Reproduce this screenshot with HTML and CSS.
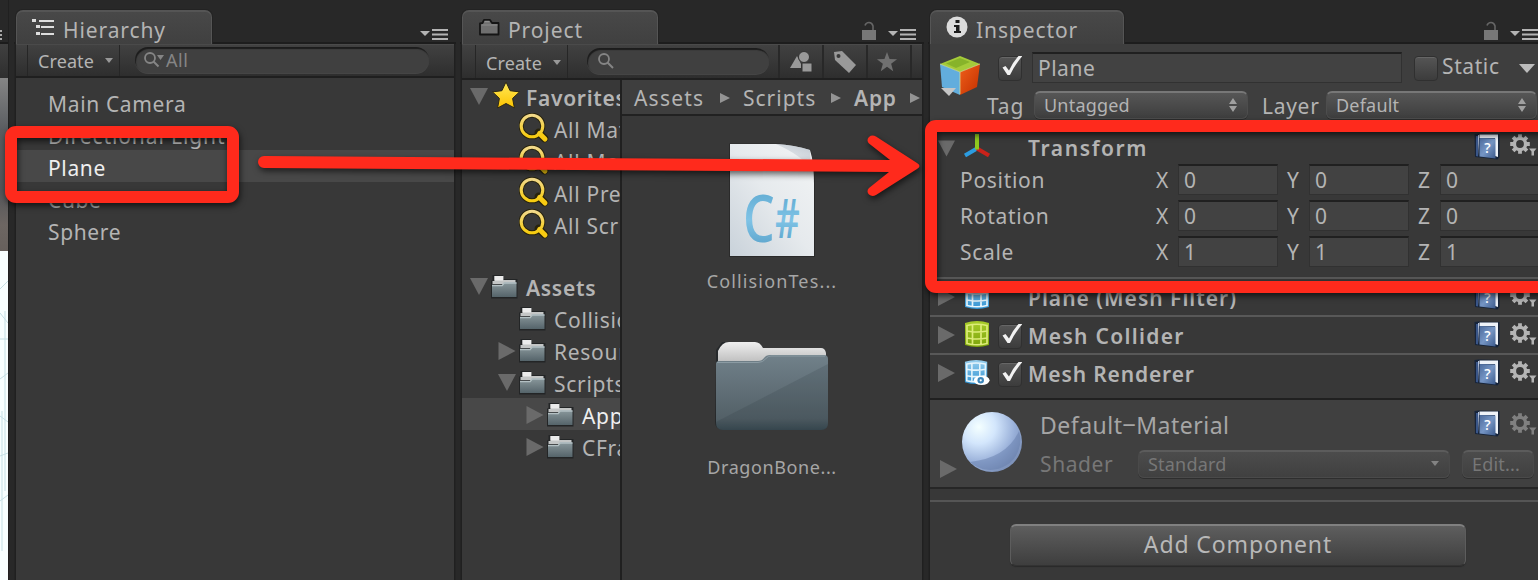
FILE: index.html
```html
<!DOCTYPE html>
<html lang="en">
<head>
<meta charset="utf-8">
<title>Unity Editor</title>
<link rel="stylesheet" href="styles.css">
</head>
<body>
<svg class="defs" width="0" height="0" aria-hidden="true">
  <defs>
    <linearGradient id="gFolder" x1="0" y1="0" x2="0" y2="1"><stop offset="0" stop-color="#89979b"/><stop offset="1" stop-color="#55646a"/></linearGradient>
    <linearGradient id="gBig" x1="0" y1="0" x2="0" y2="1"><stop offset="0" stop-color="#71818a"/><stop offset=".85" stop-color="#536067"/><stop offset="1" stop-color="#394a52"/></linearGradient>
    <linearGradient id="gTab" x1="0" y1="0" x2="0" y2="1"><stop offset="0" stop-color="#efefef"/><stop offset="1" stop-color="#b5b5b5"/></linearGradient>
    <linearGradient id="gStar" x1="0" y1="0" x2="0" y2="1"><stop offset="0" stop-color="#ffe95a"/><stop offset="1" stop-color="#fcc400"/></linearGradient>
    <linearGradient id="gLens" x1="0" y1="0" x2="0" y2="1"><stop offset="0" stop-color="#f2d98a"/><stop offset="1" stop-color="#f7cc10"/></linearGradient>
    <linearGradient id="gBook" x1="0" y1="0" x2="1" y2="1"><stop offset="0" stop-color="#4b6a9c"/><stop offset=".5" stop-color="#7595c4"/><stop offset="1" stop-color="#3c5a8c"/></linearGradient>
    <linearGradient id="gBlue" x1="0" y1="0" x2="0" y2="1"><stop offset="0" stop-color="#9bd0ee"/><stop offset="1" stop-color="#2f92d2"/></linearGradient>
    <linearGradient id="gGreen" x1="0" y1="0" x2="0" y2="1"><stop offset="0" stop-color="#a8cc2a"/><stop offset="1" stop-color="#7ba30a"/></linearGradient>
    <linearGradient id="gPage" x1="0" y1="1" x2="1" y2="0"><stop offset="0" stop-color="#c9d2da"/><stop offset=".5" stop-color="#e6eaed"/><stop offset="1" stop-color="#f2f4f5"/></linearGradient>
    <linearGradient id="gCs" x1="0" y1="0" x2="0" y2="1"><stop offset="0" stop-color="#4f9dc6"/><stop offset=".55" stop-color="#7fc3e6"/><stop offset="1" stop-color="#4a94be"/></linearGradient>
    <linearGradient id="gFold" x1="0" y1="1" x2=".5" y2="0"><stop offset="0" stop-color="#fff"/><stop offset="1" stop-color="#b9c2cc"/></linearGradient>
    <radialGradient id="gBall" cx=".28" cy=".25" r=".8"><stop offset="0" stop-color="#f4ffff"/><stop offset=".35" stop-color="#d3e6fc"/><stop offset=".75" stop-color="#98afd8"/><stop offset="1" stop-color="#7e93bb"/></radialGradient>
    <linearGradient id="gRed" x1="0" y1="0" x2="1" y2="1"><stop offset="0" stop-color="#f0601a"/><stop offset="1" stop-color="#c22f00"/></linearGradient>

    <symbol id="folder" viewBox="0 0 28 26">
      <path d="M1 24.500V6.500h1.500V1h10.500v4H27.500v19.500z" fill="#232526"/>
      <path d="M2.500 7h2V2h9v4h12v4h-23z" fill="#c4c6c6"/><path d="M4.500 2h8.500v4.500H4.500z" fill="#ececec"/>
      <path d="M2 11.500h10l2-3h12.500v14.500H2z" fill="url(#gFolder)"/><path d="M2 11.500h10.200l2-2.500h12.300" fill="none" stroke="#b3c0c3" stroke-width="1.300"/>
    </symbol>
    <symbol id="lens" viewBox="0 0 30 30">
      <path d="M19.500 19.500l6 6" stroke="#28230c" stroke-width="7.500" stroke-linecap="round"/>
      <circle cx="13" cy="13" r="10.800" fill="none" stroke="#28230c" stroke-width="5"/>
      <path d="M20.500 20.500l5.500 5.500" stroke="#f8cb12" stroke-width="5" stroke-linecap="round"/>
      <circle cx="13" cy="13" r="10.800" fill="none" stroke="url(#gLens)" stroke-width="3.100"/>
    </symbol>
    <symbol id="down" viewBox="0 0 18 17"><path d="M0 0h18L9 17z" fill="#6a6a6a"/></symbol>
    <symbol id="right" viewBox="0 0 17 18"><path d="M0 0v18l17-9z" fill="#6a6a6a"/></symbol>
    <symbol id="menu" viewBox="0 0 28 12"><path d="M0 3h10L5 8z" fill="#b4b4b4"/><path d="M12 2h16M12 6.500h16M12 11h16" stroke="#b4b4b4" stroke-width="2"/></symbol>
    <symbol id="lock" viewBox="0 0 16 20"><path d="M1 9h14v10H1z" fill="#777"/><path d="M4 4.500Q5 1.500 8 1.500T12 5v4" fill="none" stroke="#666" stroke-width="1.600"/></symbol>
    <symbol id="book" viewBox="0 0 26 27">
      <path d="M.5 1l4-.5L25.500 1v23l-2 2.500L1 24z" fill="#17243a"/><path d="M5.500 1.500H24V24l-3-1V5H5.500z" fill="#eef2f8"/>
      <path d="M2 3v20l2 .5V3z" fill="#3a5688"/><path d="M4 2v3l1 18V2z" fill="#b7c5de"/>
      <path d="M5.500 5l16 .5v20l-16-2z" fill="url(#gBook)"/>
      <text x="13.500" y="19.500" text-anchor="middle" class="book-mark">?</text>
    </symbol>
    <symbol id="gear" viewBox="0 0 28 26">
      <g stroke="currentColor" fill="none"><circle cx="11" cy="11" r="5.600" stroke-width="3.400"/>
      <path d="M11 1.200v4M11 16.800v4M1.200 11h4M16.800 11h4M4.100 4.100l3 3M14.900 14.900l3 3M17.900 4.100l-3 3M7.100 14.900l-3 3" stroke-width="3.800"/></g>
      <path d="M20 15.500h7.500l-2.500 3v4h-2.500v-4z" fill="currentColor"/>
    </symbol>
    <symbol id="mesh" viewBox="0 0 26 28">
      <path d="M1 3Q13-1 25 3v22Q13 29 1 25z"/>
      <path d="M8.500 4v20.500M17 4v20.500M3 5.500Q13 3 23 5.500v18Q13 26 3 23.500zM3 11q10 2 20 0M3 18q10 2 20 0" fill="none" stroke="currentColor" stroke-width="1.700"/>
    </symbol>
    <symbol id="check" viewBox="0 0 24 24"><path d="M4.500 11.500l3-1.500L11 14.500Q15 6 20.500 0H24.500Q17 8.500 12 19H9.500z" fill="#f2f2f2"/></symbol>
    <symbol id="updown" viewBox="0 0 8 14"><path d="M0 6l4-6 4 6zM0 8l4 6 4-6z" fill="#a0a0a0"/></symbol>
    <symbol id="caret" viewBox="0 0 8 6"><path d="M0 0h8L4 5z" fill="#989898"/></symbol>
  </defs>
</svg>

<main class="editor">
  <aside class="scene-edge">
    <div class="scene-top"><i></i><i></i><i></i></div>
    <div class="scene-bar"></div>
    <div class="scene-sky"></div>
    <svg class="scene-grid" width="8" height="329"><path d="M0 38l8-8M0 88h8M0 62l8 10M0 128l8-6M0 165l8 6M5 60v180M0 205l8-3M0 250l8-6M2 160v140" stroke="#c5dfe4" fill="none"/></svg>
  </aside>

  <section class="panel hierarchy">
    <header class="tabs">
      <div class="tab tab-h">
        <svg class="ico-tree" width="24" height="18" viewBox="0 0 24 18"><path d="M0 0h4v3H0zM4 6h4v3H4zM4 13h4v3H4zM7 1h15v2H7zM9 7h13v2H9zM9 14h13v2H9z" fill="#ddd"/></svg>
        <span class="t">Hierarchy</span>
      </div>
      <svg class="menu" width="28" height="12"><use href="#menu"/></svg>
    </header>
    <div class="toolbar">
      <div class="create">Create<svg width="8" height="6"><use href="#caret"/></svg></div>
      <div class="search search-h">
        <svg width="22" height="18" viewBox="0 0 22 18"><circle cx="7" cy="7" r="5" fill="none" stroke="#858585" stroke-width="1.800"/><path d="M10.500 10.500l5 5" stroke="#858585" stroke-width="2"/><path d="M14 4h7l-3.500 5z" fill="#858585"/></svg>All
      </div>
    </div>
    <ul class="list">
      <li>Main Camera</li>
      <li class="wide">Directional Light</li>
      <li class="on">Plane</li>
      <li>Cube</li>
      <li>Sphere</li>
    </ul>
  </section>

  <section class="panel project">
    <header class="tabs">
      <div class="tab tab-p">
        <svg class="ico-proj" width="24" height="20" viewBox="0 0 24 20"><path d="M2 5.500L4.500 5 6 2h6l2 3h6.500v11.500H2z" fill="#6f6f6f" stroke="#151515" stroke-width="1.800" stroke-linejoin="round"/><path d="M3.500 7h16" stroke="#8c8c8c"/><path d="M6.500 3.500h5" stroke="#909090" stroke-width="1.500"/></svg>
        <span class="t">Project</span>
      </div>
      <svg class="lock" width="16" height="20"><use href="#lock"/></svg>
      <svg class="menu" width="28" height="12"><use href="#menu"/></svg>
    </header>
    <div class="toolbar toolbar-p">
      <div class="create">Create<svg width="8" height="6"><use href="#caret"/></svg></div>
      <div class="search search-p"><svg width="18" height="18" viewBox="0 0 18 18"><circle cx="7" cy="7" r="5" fill="none" stroke="#858585" stroke-width="1.800"/><path d="M10.500 10.500l5.500 5.500" stroke="#858585" stroke-width="2"/></svg></div>
      <div class="tool"><svg width="24" height="24" viewBox="0 0 24 24"><path d="M1 18L8 6l4 8v4z" fill="#999"/><circle cx="15" cy="7" r="5.500" fill="#999" stroke="#333"/><path d="M13 13h10v9H13z" fill="#999" stroke="#333"/></svg></div>
      <div class="tool"><svg width="24" height="24" viewBox="0 0 24 24"><path d="M1 2l8-1 14 14-7 8L2 10z" fill="#999"/><circle cx="5.500" cy="6" r="2" fill="#383838"/></svg></div>
      <div class="tool last"><svg width="22" height="22" viewBox="0 0 24 24"><path d="M12 1l2.800 7.800 8.200.2-6.500 5 2.300 8L12 17.300 5.200 22l2.300-8L1 9l8.200-.2z" fill="#707070"/></svg></div>
    </div>
    <div class="project-body">
      <ul class="tree">
        <li class="b"><svg class="arr" width="18" height="17"><use href="#down"/></svg><svg class="star" width="30" height="28" viewBox="0 0 30 28"><path d="M15 1l4.100 8.700 9.400 1.200-6.900 6.500 1.800 9.500L15 22.500 6.600 27l1.800-9.600-6.900-6.500 9.400-1.200z" fill="url(#gStar)" stroke="#2d2814"/></svg>Favorites</li>
        <li class="q"><svg width="30" height="30"><use href="#lens"/></svg>All Materials</li>
        <li class="q"><svg width="30" height="30"><use href="#lens"/></svg>All Models</li>
        <li class="q"><svg width="30" height="30"><use href="#lens"/></svg>All Prefabs</li>
        <li class="q"><svg width="30" height="30"><use href="#lens"/></svg>All Scripts</li>
        <li class="gap"></li>
        <li class="b"><svg class="arr" width="18" height="17"><use href="#down"/></svg><svg class="fold" width="28" height="26"><use href="#folder"/></svg>Assets</li>
        <li class="l1"><span class="arr"></span><svg class="fold" width="28" height="26"><use href="#folder"/></svg>Collision</li>
        <li class="l1"><svg class="arr" width="17" height="18"><use href="#right"/></svg><svg class="fold" width="28" height="26"><use href="#folder"/></svg>Resources</li>
        <li class="l1"><svg class="arr" width="18" height="17"><use href="#down"/></svg><svg class="fold" width="28" height="26"><use href="#folder"/></svg>Scripts</li>
        <li class="l2 on"><svg class="arr" width="17" height="18"><use href="#right"/></svg><svg class="fold" width="28" height="26"><use href="#folder"/></svg>App</li>
        <li class="l2"><svg class="arr" width="17" height="18"><use href="#right"/></svg><svg class="fold" width="28" height="26"><use href="#folder"/></svg>CFramework</li>
      </ul>
      <div class="files">
        <nav class="crumbs"><span class="c1">Assets</span><i></i><span class="c2">Scripts</span><i></i><b>App</b><i></i></nav>
        <div class="file">
          <svg width="92" height="120" viewBox="0 0 92 120">
            <path d="M3 3.500h50l32 6.500 4 30v77H3z" fill="#2a2a2a"/>
            <path d="M4 4h46q18 1 34 6 4 12 4 34v72H4z" fill="url(#gPage)"/>
            <path d="M50 4q18 1 34 6l1 20q-8-14-35-26z" fill="url(#gFold)" opacity=".7"/>
            <text transform="translate(17 101.500) scale(.76 1)" class="cs-c">C</text><text transform="translate(49 98) scale(.7 1)" class="cs-hash">#</text>
          </svg>
          <span class="f1">CollisionTes...</span>
        </div>
        <div class="file file-2">
          <svg width="120" height="96" viewBox="0 0 120 96">
            <path d="M4 20V12l6-8h34l4 6h60q5 0 5 6l2 6v62q0 7-7 7H10q-7 0-7-7z" fill="#26292b"/>
            <path d="M6 28V13Q10 4 17 4h26q5 0 8 6h58q4 0 5 5v12z" fill="url(#gTab)"/>
            <path d="M4 26q0-3 3-3h39q4 0 6-3 2-3 6-3h54q4 0 4 4v64q0 7-7 7H11q-7 0-7-7z" fill="url(#gBig)"/>
            <path d="M116 26v59q0 7-7 7H11q-6 0-7-5V84z" fill="#26343b" opacity=".16"/>
            <path d="M5 24.500h41q5 0 8-4 2-2.500 5-2.500h54" fill="none" stroke="#8b9ba3"/>
          </svg>
          <span class="f2">DragonBone...</span>
        </div>
      </div>
    </div>
  </section>

  <section class="panel inspector">
    <header class="tabs">
      <div class="tab tab-i">
        <svg class="ico-info" width="22" height="22" viewBox="0 0 22 22"><circle cx="11" cy="11" r="10.500" fill="#dcdcdc"/><path d="M9.500 4h4v3h-4zM8 9h5.500v6H15v2H8v-2h2v-4H8z" fill="#1c1c1c"/></svg>
        <span class="t">Inspector</span>
      </div>
      <svg class="lock" width="16" height="20"><use href="#lock"/></svg>
      <svg class="menu" width="28" height="12"><use href="#menu"/></svg>
    </header>
    <div class="object">
      <svg class="cube" width="46" height="44" viewBox="0 0 46 44">
        <path d="M2 8L22 0l20 8-20 8z" fill="#a5cb3a"/><path d="M8 7.500L22 2l10 4-14 6z" fill="#87b32a"/><path d="M2 8l20 8v23L4 31z" fill="#62addd"/><path d="M22 16l20-8-3 23-17 8z" fill="url(#gRed)"/>
        <path d="M2 8l20 8 20-8M22 16v22" fill="none" stroke="#d9e69a" stroke-opacity=".7"/><path d="M3 32h15l-7 8z" fill="#c6c6c6"/>
      </svg>
      <div class="object-rows">
        <div class="object-row">
          <span class="box"><svg width="24" height="24"><use href="#check"/></svg></span>
          <div class="field name">Plane</div>
          <span class="box static"></span><span class="static-label">Static</span>
          <svg class="static-arr" width="16" height="9" viewBox="0 0 16 9"><path d="M0 0h16L8 9z" fill="#bcbcbc"/></svg>
        </div>
        <div class="object-row second">
          <span class="tag-label">Tag</span><div class="drop tag">Untagged<svg width="8" height="14"><use href="#updown"/></svg></div>
          <span class="layer-label">Layer</span><div class="drop layer">Default<svg width="8" height="14"><use href="#updown"/></svg></div>
        </div>
      </div>
    </div>
    <div class="comp transform">
      <div class="comp-head">
        <svg class="arr" width="17" height="17"><use href="#down"/></svg>
        <svg class="ci" width="28" height="26" viewBox="0 0 28 26"><path d="M14 14.500L2 21.500" stroke="#2c9ce0" stroke-width="4"/><path d="M14 14.500l12 7" stroke="#c9221a" stroke-width="4"/><path d="M14 0v15.500" stroke="#8fc81e" stroke-width="4"/></svg>
        <b class="w-tr">Transform</b><svg class="book" width="26" height="27"><use href="#book"/></svg><svg class="gear" width="28" height="26"><use href="#gear"/></svg>
      </div>
      <div class="vec"><label>Position</label><span>X</span><div class="field">0</div><span>Y</span><div class="field">0</div><span>Z</span><div class="field">0</div></div>
      <div class="vec"><label>Rotation</label><span>X</span><div class="field">0</div><span>Y</span><div class="field">0</div><span>Z</span><div class="field">0</div></div>
      <div class="vec"><label>Scale</label><span>X</span><div class="field">1</div><span>Y</span><div class="field">1</div><span>Z</span><div class="field">1</div></div>
    </div>
    <div class="comp comp-head">
      <svg class="arr" width="17" height="18"><use href="#right"/></svg><svg class="ci mesh-blue" width="26" height="28"><use href="#mesh"/></svg>
      <b>Plane (Mesh Filter)</b><svg class="book" width="26" height="27"><use href="#book"/></svg><svg class="gear" width="28" height="26"><use href="#gear"/></svg>
    </div>
    <div class="comp comp-head">
      <svg class="arr" width="17" height="18"><use href="#right"/></svg><svg class="ci mesh-green" width="26" height="28"><use href="#mesh"/></svg>
      <span class="box"><svg width="24" height="24"><use href="#check"/></svg></span>
      <b class="w-mc">Mesh Collider</b><svg class="book" width="26" height="27"><use href="#book"/></svg><svg class="gear" width="28" height="26"><use href="#gear"/></svg>
    </div>
    <div class="comp comp-head tall">
      <svg class="arr" width="17" height="18"><use href="#right"/></svg>
      <svg class="ci mesh-blue" width="28" height="28" viewBox="0 0 28 28"><use href="#mesh" width="26" height="28"/><ellipse cx="19" cy="23" rx="8.500" ry="5" fill="#fff"/><circle cx="18" cy="23" r="3.500" fill="#3c86ba"/><circle cx="18" cy="23" r="1.200" fill="#fff"/></svg>
      <span class="box"><svg width="24" height="24"><use href="#check"/></svg></span>
      <b class="w-mr">Mesh Renderer</b><svg class="book" width="26" height="27"><use href="#book"/></svg><svg class="gear" width="28" height="26"><use href="#gear"/></svg>
    </div>
    <div class="material">
      <svg class="arr" width="17" height="18"><use href="#right"/></svg>
      <svg class="ball" width="60" height="60" viewBox="0 0 60 60"><circle cx="30" cy="30" r="30" fill="url(#gBall)"/><path d="M8 50Q45 46 57 19a30 30 0 0 1-49 31z" fill="#5f77a6" opacity=".45"/></svg>
      <div class="mat-main">
        <div class="mat-title"><span>Default‒Material</span><svg class="book" width="26" height="27"><use href="#book"/></svg><svg class="gear dim" width="28" height="26"><use href="#gear"/></svg></div>
        <div class="mat-shader"><span>Shader</span><div class="drop shader">Standard<svg width="8" height="6"><use href="#caret"/></svg></div><div class="drop edit">Edit...</div></div>
      </div>
    </div>
    <div class="footer"><button class="add">Add Component</button></div>
  </section>
</main>

<div class="mark mark-left"></div>
<div class="mark mark-right"></div>
<svg class="arrow" width="1538" height="580" viewBox="0 0 1538 580">
  <path d="M264 156L890 160 869 143.500Q866 140 869 137 872 134.500 876 136.500L917 163Q922 166 917 169L876 195Q872 197 869 194.500 866 191 869 188L889 172 264 168A6 6 0 0 1 264 156z" fill="#ff2a1c"/>
</svg>
</body>
</html>
```
FILE: styles.css
```css
* { box-sizing: border-box; }
body { margin: 0; width: 1538px; height: 580px; overflow: hidden; position: relative; background: #282828; color: #b4b4b4; font: 21px/26px "Noto Sans", "Open Sans", sans-serif; letter-spacing: .7px; white-space: nowrap; }
ul { list-style: none; margin: 0; padding: 0; }
svg { display: block; flex: none; }
.defs { position: absolute; }
.editor { display: grid; grid-template-columns: 8px 438px 460px 608px; column-gap: 8px; height: 580px; }

.scene-edge { display: flex; flex-direction: column; border-right: 1px solid #202020; overflow: hidden; width: 9px; }
.scene-top { height: 44px; padding-top: 30px; border-bottom: 2px solid #1c1c1c; }
.scene-top i { display: block; width: 2px; height: 2px; margin-bottom: 2px; background: #aaa; }
.scene-bar { height: 34px; background: linear-gradient(#404040, #2e2e2e); }
.scene-sky { height: 173px; background: linear-gradient(#858585 0, #5a5d61 30%, #55565a 65%, #6d6662 85%, #67605c); }
.scene-grid { background: #f8ffff; }

.panel { display: flex; flex-direction: column; min-width: 0; background: #383838; box-shadow: 0 0 0 1.5px #202020; }
.tabs { display: flex; height: 44px; padding-top: 10px; background: #282828; border-bottom: 2px solid #1d1d1d; align-items: flex-start; margin: 0 -2px; }
.tab { display: flex; height: 34px; border: 1px solid #555; border-bottom: 0; border-top: 2px solid #555; border-radius: 7px 7px 0 0; background: linear-gradient(#484848, #404040); margin-left: 2px; margin-bottom: -2px; box-shadow: 0 0 0 1px #232323; }
.tab .t { padding-top: 5px; letter-spacing: .9px; }
.tab-h { width: 196px; padding-left: 15px; }
.tab-p { width: 196px; padding-left: 15px; }
.tab-i { width: 194px; padding-left: 15px; }
.ico-tree { margin: 7px 7px 0 0; }
.ico-proj { margin: 6px 6px 0 0; }
.ico-info { margin: 4px 8px 0 0; }
.tabs .menu { margin: 18px 8px 0 auto; }
.tabs .lock { margin: 11px 11px 0 auto; }
.tabs .lock + .menu { margin: 18px 8px 0 0; }
.inspector .tabs .lock + .menu { margin-right: 2px; }

.toolbar { display: flex; height: 34px; padding-left: 11px; background: linear-gradient(#414141, #2e2e2e); border-bottom: 2px solid #1f1f1f; border-top: 1px solid #4a4a4a; }
.toolbar-p { height: 36px; padding-left: 13px; }
.create { display: flex; align-items: center; justify-content: space-between; width: 93px; padding: 1px 6px 0 10px; border: 1px solid #262626; border-width: 0 1px; font-size: 18px; letter-spacing: .1px; flex: none; }
.toolbar-p .create { padding-top: 3px; }
.search { display: flex; align-items: center; flex: none; height: 26px; margin-top: 2px; border-radius: 13px; background: #404040; box-shadow: inset 1px 2px 1px #1c1c1c, 0 1px 0 #454545; font-size: 18px; letter-spacing: .6px; color: #858585; }
.search-h { width: 294px; margin-left: 15px; padding: 0 0 1px 8px; line-height: 22px; gap: 1px; }
.search-p { width: 182px; margin: 3px 9px 0 19px; padding-left: 10px; }
.tool { display: flex; align-items: center; justify-content: center; width: 44px; border-left: 2px solid #282828; flex: none; }
.tool.last { border-right: 2px solid #282828; width: 46px; padding-right: 4px; }

.list { padding-top: 8px; }
.list li { height: 32px; padding: 5px 0 0 32px; letter-spacing: .65px; }
.list .wide { letter-spacing: .9px; }
.on { background: #484848; color: #efefef; }

.project-body { display: flex; flex: 1; min-height: 0; }
.tree { width: 160px; border-right: 2px solid #202020; overflow: hidden; }
.tree li { display: flex; align-items: center; height: 32px; padding-left: 8px; line-height: 32px; padding-top: 4px; overflow: hidden; }
.tree li.gap { height: 30px; }
.tree .arr { width: 18px; margin-top: -3px; flex: none; }
.tree .star { margin: -6px 5px 0 3px; }
.tree .fold { margin: -3px 8px 0 2px; }
.tree .b { font-weight: 600; letter-spacing: .7px; }
.tree .q { padding-left: 57px; }
.tree .q svg { margin: -5px 5px 0 0; }
.tree .l1 { padding-left: 36px; }
.tree .l2 { padding-left: 64px; }
.files { flex: 1; min-width: 0; display: flex; flex-direction: column; align-items: flex-start; overflow: hidden; }
.crumbs { display: flex; align-items: center; width: 100%; height: 36px; padding: 2px 0 0 12px; background: #3e3e3e; border-bottom: 2px solid #212121; letter-spacing: 1px; }
.crumbs > * { flex: none; }
.crumbs i { width: 0; border: 5px solid transparent; border-left: 10px solid #949494; border-right: 0; margin: 0 13px; }
.c1 { width: 73px; letter-spacing: 1.2px; }
.c2 { width: 75px; }
.crumbs b { width: 43px; font-weight: 600; letter-spacing: .8px; }
.file { display: flex; flex-direction: column; align-items: center; width: 300px; padding-top: 24px; font-size: 18px; color: #a6a6a6; }
.file span { margin-top: 8px; }
.file-2 { padding-top: 44px; }
.file-2 span { margin-top: 20px; }
.f1 { letter-spacing: 1.15px; }
.f2 { letter-spacing: .6px; }
.cs-c { font: 600 66px "Open Sans", sans-serif; fill: url(#gCs); letter-spacing: 0; }
.cs-hash { font: 600 55px "Open Sans", sans-serif; fill: url(#gCs); letter-spacing: 0; }

.object { display: flex; height: 83px; background: #3e3e3e; padding-left: 8px; }
.cube { margin: 12px 3px 0 0; }
.object-row { display: flex; padding: 8px 0 0 11px; }
.object-row.second { padding: 0; margin-top: 8px; align-items: flex-start; }
.box { width: 24px; height: 25px; margin-top: 4px; flex: none; border: 1px solid #303030; border-radius: 4px; background: linear-gradient(#555, #3c3c3c); box-shadow: inset 0 1px 0 #666; }
.box svg { margin: -1px; overflow: visible; }
.field { height: 31px; padding: 1px 5px; background: #424242; border: 1px solid #313131; border-top: 2px solid #202020; letter-spacing: .5px; }
.name { width: 370px; margin-left: 10px; }
.static { margin-left: 12px; }
.static-label { margin: 1px 0 0 4px; letter-spacing: .6px; width: 77px; }
.static-arr { margin-top: 12px; }
.drop { display: flex; align-items: center; justify-content: space-between; height: 28px; padding: 0 10px 1px 9px; border: 1px solid #4d4d4d; border-top: 2px solid #777; border-radius: 6px; background: linear-gradient(#565656, #3e3e3e); box-shadow: 0 1px 0 #2e2e2e; font-size: 18px; letter-spacing: .2px; }
.tag-label { width: 47px; margin-top: 2px; text-align: right; padding-right: 10px; letter-spacing: .8px; }
.tag { width: 214px; }
.layer-label { width: 78px; margin-top: 2px; padding-left: 14px; }
.layer { width: 211px; }
.comp { border-bottom: 2px solid #585858; }
.comp-head { display: flex; height: 38px; padding-left: 8px; align-items: flex-start; }
.comp-head .arr { margin-top: 9px; }
.comp-head .ci { width: 26px; height: 28px; margin: 3px 8px 0 9px; }
.comp-head b { margin: 6px auto 0 26px; padding-left: 6px; font-weight: 600; letter-spacing: 1px; }
.comp-head .ci + b { margin-left: 24px; }
.comp-head .box { margin-top: 7px; }
.comp-head .box + b { margin-left: 0; }
.comp-head .w-tr { letter-spacing: 1.6px; }
.comp-head .w-mc { letter-spacing: 1.3px; }
.comp-head .w-mr { letter-spacing: .85px; }
.book { margin: 4px 9px 0 0; }
.gear { margin-top: 5px; margin-right: 1px; color: #b4b4b4; }
.dim { color: #808080; }
.book-mark { font: 600 14px "Open Sans", sans-serif; fill: #fff; letter-spacing: 0; }
.transform { height: 152px; padding-top: 1px; }
.transform .comp-head { height: 36px; }
.transform .arr { margin-top: 12px; }
.transform .comp-head .ci { width: 28px; height: 26px; margin: 6px 7px 0 8px; }
.transform b { margin-top: 7px; }
.transform .book { margin-top: 5px; }
.vec { display: flex; height: 36px; padding-left: 30px; overflow: hidden; }
.vec > * { flex: none; }
.vec label { width: 196px; padding-top: 3px; }
.vec span { width: 22px; padding-top: 3px; }
.vec .field { width: 100px; margin-right: 9px; }
.mesh-blue { fill: url(#gBlue); color: #e6f5fc; }
.mesh-green { fill: url(#gGreen); color: #dcec78; }
.comp.tall { height: 45px; border-bottom: 2px solid #202020; }
.material { display: flex; height: 89px; padding-left: 10px; background: #404040; border-bottom: 2px solid #262626; }
.material .arr { margin-top: 60px; }
.ball { margin: 12px 18px 0 5px; }
.mat-title { display: flex; height: 51px; font-size: 23px; letter-spacing: .5px; }
.mat-title span { width: 434px; padding-top: 12px; color: #a6a6a6; }
.mat-title .book { margin-top: 10px; }
.mat-title .gear { margin-top: 12px; }
.mat-shader { display: flex; color: #777; }
.mat-shader span { width: 98px; letter-spacing: .6px; }
.mat-shader .drop { height: 28px; background: linear-gradient(#4c4c4c, #404040); border-color: #4a4a4a; border-top-color: #5c5c5c; margin-top: -1px; padding-bottom: 2px; }
.mat-shader .drop svg { opacity: .75; }
.shader { width: 312px; margin-right: 12px; }
.edit { width: 72px; }
.footer { flex: 1; margin-top: 11px; border-top: 2px solid #555; padding: 22px 0 0 80px; }
.add { display: block; width: 456px; height: 42px; border: 1px solid #5d5d5d; border-top: 2px solid #808080; border-bottom-color: #333; border-radius: 6px; background: linear-gradient(#5e5e5e, #3e3e3e); box-shadow: 0 1px 1px #2a2a2a; color: #b8b8b8; font: 23px/34px "Noto Sans", sans-serif; letter-spacing: .9px; padding: 0 0 4px; }

.mark { position: absolute; border: 12px solid #ff2a1c; border-radius: 11px; filter: drop-shadow(1px 3px 3px rgba(0,0,0,.65)); }
.mark-left { left: 5px; top: 126px; width: 234px; height: 77px; }
.mark-right { left: 925px; top: 120px; width: 640px; height: 173px; }
.arrow { position: absolute; left: 0; top: 0; filter: drop-shadow(1px 3px 3px rgba(0,0,0,.6)); }
```
